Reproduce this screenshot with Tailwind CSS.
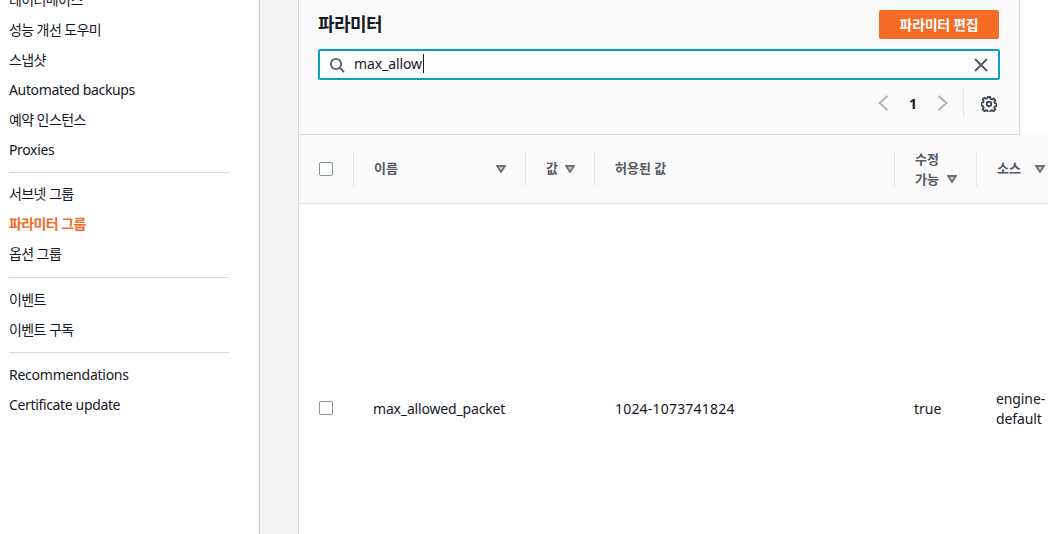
<!DOCTYPE html>
<html lang="ko">
<head>
<meta charset="utf-8">
<script src="https://cdn.jsdelivr.net/npm/@tailwindcss/browser@4"></script>
<title>파라미터</title>
</head>
<body class="m-0 bg-white">
<div class="flex h-[534px] w-[1048px] overflow-hidden bg-[#f2f3f3] text-[14px] text-[#16191f] font-['Noto_Sans','Noto_Sans_CJK_KR',sans-serif]">
  <nav class="w-[260px] shrink-0 border-r border-[#c4c8cc] bg-white pl-[9px]">
    <ul class="-mt-[16px] w-[220px] tracking-[-0.6px]">
      <li class="flex h-[30px] items-center">데이터베이스</li>
      <li class="flex h-[30px] items-center">성능 개선 도우미</li>
      <li class="flex h-[30px] items-center">스냅샷</li>
      <li class="flex h-[30px] items-center tracking-[-0.35px]">Automated backups</li>
      <li class="flex h-[30px] items-center">예약 인스턴스</li>
      <li class="flex h-[30px] items-center tracking-[-0.35px]">Proxies</li>
      <li class="mt-[8px] mb-[5px] h-px bg-[#d5dbdb]"></li>
      <li class="flex h-[30px] items-center">서브넷 그룹</li>
      <li class="flex h-[30px] items-center font-bold text-[#f46b25]">파라미터 그룹</li>
      <li class="flex h-[30px] items-center">옵션 그룹</li>
      <li class="mt-[9px] mb-[6px] h-px bg-[#d5dbdb]"></li>
      <li class="flex h-[30px] items-center">이벤트</li>
      <li class="flex h-[30px] items-center">이벤트 구독</li>
      <li class="mt-[8px] mb-[6px] h-px bg-[#d5dbdb]"></li>
      <li class="flex h-[30px] items-center tracking-[-0.25px]">Recommendations</li>
      <li class="flex h-[30px] items-center tracking-[-0.35px]">Certificate update</li>
    </ul>
  </nav>
  <main class="min-w-0 flex-1 pl-[38px]">
    <section class="h-full w-[760px] border-l border-[#d5dbdb] bg-white">
      <header class="h-[135px] w-[721px] border-r border-b border-[#d5dbdb] bg-[#fafafa] pl-[19px] pr-[20px] pt-[10px]">
        <div class="flex h-[29px] items-center justify-between">
          <h2 class="text-[18px] font-bold leading-[29px] tracking-[-0.6px]">파라미터</h2>
          <button class="flex h-[29px] w-[120px] items-center justify-center rounded-[2px] bg-[#f46b25] text-[14px] font-bold tracking-[-0.3px] text-white">파라미터 편집</button>
        </div>
        <div class="-mr-px mt-[10px] flex h-[31px] items-center rounded-[2px] border-2 border-[#0aa0c6] bg-white pl-[9px] pr-[10px]">
          <svg width="16" height="16" viewBox="0 0 16 16" fill="none" stroke="#545b64" stroke-width="1.8" class="shrink-0"><circle cx="7" cy="7" r="5.2"/><path d="M11 11l4 4"/></svg>
          <span class="ml-[9px] flex-1 -translate-y-px leading-[25px] tracking-[-0.1px]"><span class="border-r border-[#16191f] pr-px">max_allow</span></span>
          <svg width="14" height="14" viewBox="0 0 14 14" fill="none" stroke="#545b64" stroke-width="2" class="shrink-0"><path d="M1 1l12 12M13 1L1 13"/></svg>
        </div>
        <div class="mt-[8px] flex h-[30px] items-center justify-end">
          <svg width="12" height="16" viewBox="0 0 12 16" fill="none" stroke="#aab7b8" stroke-width="2"><path d="M10.5 1L2.5 8l8 7"/></svg>
          <span class="ml-[19px] w-[10px] text-center text-[14px] font-bold">1</span>
          <svg width="12" height="16" viewBox="0 0 12 16" fill="none" stroke="#aab7b8" stroke-width="2" class="ml-[19px]"><path d="M1.5 1l8 7-8 7"/></svg>
          <div class="ml-[14px] h-[30px] w-px bg-[#e4e7e7]"></div>
          <svg width="16" height="16" viewBox="0 0 16 16" fill="none" stroke="#414750" stroke-width="1.9" stroke-linejoin="round" class="ml-[17px] mr-[2px] translate-y-px"><circle cx="8" cy="8" r="2.2"/><path d="M6.8 1h2.4l.4 1.9 1.3.6 1.7-1 1.7 1.7-1 1.7.6 1.3 1.9.4v2.4l-1.9.4-.6 1.3 1 1.7-1.7 1.7-1.7-1-1.3.6-.4 1.9H6.8l-.4-1.9-1.3-.6-1.7 1-1.7-1.7 1-1.7-.6-1.3L.2 9.2V6.8l1.9-.4.6-1.3-1-1.7 1.7-1.7 1.7 1 1.3-.6z"/></svg>
        </div>
      </header>
      <div class="grid h-[69px] grid-cols-[54px_172px_69px_300px_82px_82px] items-center border-b border-[#e4e7e7] bg-[#fafafa] text-[13px] font-bold text-[#545b64]">
        <div class="flex h-[34px] items-center pl-[20px]"><span class="block h-[14px] w-[14px] rounded-[2px] border border-[#879596] bg-white"></span></div>
        <div class="flex h-[34px] items-center justify-between border-l border-[#e4e7e7] pl-[20px] pr-[19px]">이름
          <svg width="10" height="8" viewBox="0 0 10 8" fill="#c5cccc" stroke="#687078" stroke-width="1.8"><path d="M1 1h8L5 7z"/></svg>
        </div>
        <div class="flex h-[34px] items-center gap-[7px] border-l border-[#e4e7e7] pl-[20px]">값
          <svg width="10" height="8" viewBox="0 0 10 8" fill="#c5cccc" stroke="#687078" stroke-width="1.8"><path d="M1 1h8L5 7z"/></svg>
        </div>
        <div class="flex h-[34px] items-center border-l border-[#e4e7e7] pl-[20px]">허용된 값</div>
        <div class="-mt-[1px] h-[34px] border-l border-[#e4e7e7] pl-[20px] leading-[20px]">
          <div class="-mt-[3px]">수정</div>
          <div class="flex items-center gap-[8px]">가능
            <svg width="10" height="8" viewBox="0 0 10 8" fill="#c5cccc" stroke="#687078" stroke-width="1.8"><path d="M1 1h8L5 7z"/></svg>
          </div>
        </div>
        <div class="flex h-[34px] items-center gap-[14px] border-l border-[#e4e7e7] pl-[20px]">소스
          <svg width="10" height="8" viewBox="0 0 10 8" fill="#c5cccc" stroke="#687078" stroke-width="1.8" class="shrink-0"><path d="M1 1h8L5 7z"/></svg>
        </div>
      </div>
      <div class="grid h-[408px] grid-cols-[54px_172px_69px_300px_82px_82px] items-center bg-white">
        <div class="pl-[20px]"><span class="block h-[14px] w-[14px] rounded-[2px] border border-[#879596] bg-white"></span></div>
        <div class="pl-[20px] whitespace-nowrap tracking-[-0.17px]">max_allowed_packet</div>
        <div></div>
        <div class="pl-[21px] tracking-[0.2px]">1024-1073741824</div>
        <div class="pl-[20px]">true</div>
        <div class="translate-y-px pl-[20px] leading-[20px] tracking-[-0.1px]">engine-<br>default</div>
      </div>
    </section>
  </main>
</div>
</body>
</html>
